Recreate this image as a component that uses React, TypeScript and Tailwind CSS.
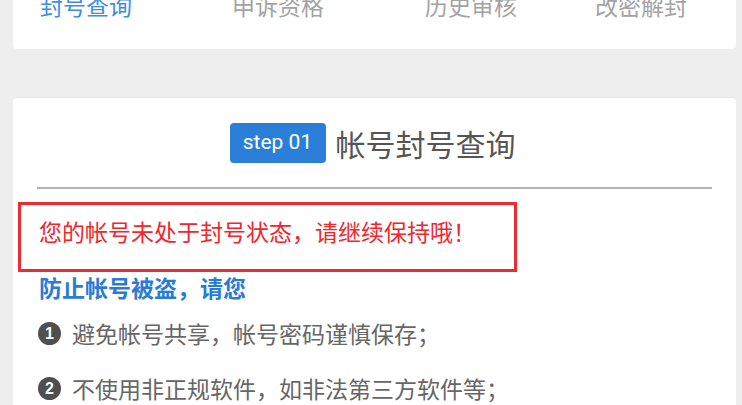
import React from "react";

const cjk = { fontFamily: '"Noto Sans CJK SC", "Noto Sans", sans-serif' };

function Num({ n }: { n: string }) {
  return (
    <span
      className="inline-flex h-[23px] w-[23px] min-w-[23px] shrink-0 items-center justify-center rounded-full bg-[#4f4f4f] text-[16px] font-bold leading-none text-white"
      style={{ fontFamily: '"Liberation Sans", Arial, sans-serif' }}
    >
      {n}
    </span>
  );
}

export default function App() {
  return (
    <div className="h-[405px] w-[742px] overflow-hidden bg-[#eeeeee]" style={cjk}>
      {/* top tab card */}
      <div className="ml-[13px] h-[49px] w-[723px] overflow-hidden rounded-b-[4px] bg-white">
        <div className="mt-[-6px] flex pl-[27px] text-[23px] leading-[23px]">
          <span className="w-[92px] whitespace-nowrap text-[#3f8de0]">封号查询</span>
          <span className="ml-[100px] w-[92px] whitespace-nowrap text-[#a3a3a3]">申诉资格</span>
          <span className="ml-[101px] w-[92px] whitespace-nowrap text-[#a3a3a3]">历史审核</span>
          <span className="ml-[78px] w-[92px] whitespace-nowrap text-[#a3a3a3]">改密解封</span>
        </div>
      </div>

      {/* main card */}
      <div className="ml-[13px] mt-[48px] h-[330px] w-[723px] rounded-t-[4px] border-t border-[#e6e6e6] bg-white pt-[25px]">
        <div className="flex items-center justify-center pr-[4px]">
          <span
            className="flex h-[40px] w-[96px] items-center justify-center rounded-[4px] bg-[#2b7fd9] text-[21px] text-white"
            style={{ fontFamily: 'Roboto, "Liberation Sans", sans-serif' }}
          >
            step 01
          </span>
          <span className="ml-[10px] text-[30px] leading-[40px] text-[#555555]">帐号封号查询</span>
        </div>

        <div className="mx-[24px] mt-[24px] h-[2px] bg-[#b4b4b4]" />

        <div className="ml-[5px] mt-[13px] h-[70px] w-[499px] border-[3px] border-[#ee2b30] pl-[18px] pt-[15px]">
          <p className="whitespace-nowrap text-[23px] leading-[23px] text-[#f0262c]">
            您的帐号未处于封号状态，请继续保持哦！
          </p>
        </div>

        <div className="pl-[25px]">
          <p className="mt-[4px] pl-[1px] whitespace-nowrap text-[23px] font-bold leading-[23px] text-[#2a7bd6]">
            防止帐号被盗，请您
          </p>
          <div className="mt-[23px] flex items-center whitespace-nowrap text-[23px] leading-[23px] text-[#666666]">
            <Num n="1" />
            <span className="ml-[11px]">避免帐号共享，帐号密码谨慎保存；</span>
          </div>
          <div className="mt-[32px] flex items-center whitespace-nowrap text-[23px] leading-[23px] text-[#666666]">
            <Num n="2" />
            <span className="ml-[11px]">不使用非正规软件，如非法第三方软件等；</span>
          </div>
        </div>
      </div>
    </div>
  );
}
